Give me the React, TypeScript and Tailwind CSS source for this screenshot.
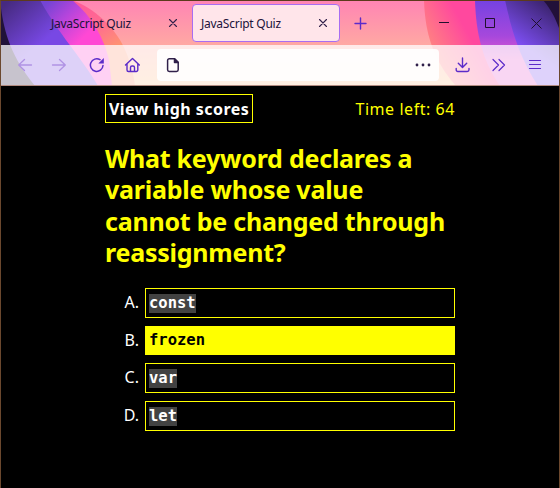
import React from "react";

const ui = "font-['Noto_Sans',sans-serif]";

function Backdrop() {
  return (
    <svg className="absolute inset-0" width="558" height="85" viewBox="1 1 558 85" aria-hidden="true">
      <defs>
        <linearGradient id="sky" x1="0" y1="0" x2="0" y2="1">
          <stop offset="0" stopColor="#ff84b4" />
          <stop offset="0.55" stopColor="#ffaaa2" />
          <stop offset="1" stopColor="#ffc48c" />
        </linearGradient>
        <linearGradient id="violet" gradientUnits="userSpaceOnUse" x1="10" y1="0" x2="45" y2="40">
          <stop offset="0" stopColor="#462a80" />
          <stop offset="1" stopColor="#7848e4" />
        </linearGradient>
        <linearGradient id="magenta" gradientUnits="userSpaceOnUse" x1="50" y1="0" x2="85" y2="36">
          <stop offset="0" stopColor="#7444d4" />
          <stop offset="0.45" stopColor="#b445dc" />
          <stop offset="1" stopColor="#ff48d4" />
        </linearGradient>
        <linearGradient id="coral" gradientUnits="userSpaceOnUse" x1="90" y1="0" x2="118" y2="45">
          <stop offset="0" stopColor="#ff5c98" />
          <stop offset="0.5" stopColor="#ff6c90" />
          <stop offset="1" stopColor="#ff9272" />
        </linearGradient>
        <linearGradient id="rcoral" gradientUnits="userSpaceOnUse" x1="422" y1="35" x2="458" y2="15">
          <stop offset="0" stopColor="#ff8480" />
          <stop offset="1" stopColor="#ff489e" />
        </linearGradient>
        <linearGradient id="rviolet" gradientUnits="userSpaceOnUse" x1="490" y1="0" x2="490" y2="60">
          <stop offset="0" stopColor="#7442e2" />
          <stop offset="0.6" stopColor="#a648dc" />
          <stop offset="1" stopColor="#e85cce" />
        </linearGradient>
        <linearGradient id="rindigo" gradientUnits="userSpaceOnUse" x1="548" y1="5" x2="520" y2="44">
          <stop offset="0" stopColor="#3c2470" />
          <stop offset="1" stopColor="#7c4ef0" />
        </linearGradient>
      </defs>
      <rect width="560" height="86" fill="url(#sky)" />
      <path d="M0 0H72C98 10 119 31 128 57C132 68 134 77 135 86H0Z" fill="url(#coral)" />
      <path d="M0 0H72C91 15 104 38 109 60L112 86H0Z" fill="url(#magenta)" />
      <path d="M0 0H40C51 20 63 36 75 52C86 67 93 77 98 86H0Z" fill="url(#violet)" />
      <path d="M0 0C3 28 9 54 35 86H0Z" fill="#211239" />
      <path d="M424 0C425 33 433 60 456 86H560V0Z" fill="url(#rcoral)" />
      <path d="M475 0C476 33 482 60 500 86H560V0Z" fill="url(#rviolet)" />
      <path d="M505 0C511 28 519 57 538 86H560V0Z" fill="url(#rindigo)" />
      <path d="M543 0C551 9 556 19 560 31V0Z" fill="#221039" />
    </svg>
  );
}

function Icon({ d, className = "text-[#5b2bc9]", width = 1.4 }: { d: string; className?: string; width?: number }) {
  return (
    <svg className={"block shrink-0 " + className} width="16" height="16" viewBox="0 0 16 16" fill="none" stroke="currentColor" strokeWidth={width} strokeLinecap="round" strokeLinejoin="round">
      <path d={d} />
    </svg>
  );
}

const cross = "M4.5 4.5l7 7M11.5 4.5l-7 7";

function TabBar() {
  return (
    <div className="relative flex h-[44px] items-center">
      <div className="flex w-[190px] items-center pl-[50px]">
        <span className="w-[90px] whitespace-nowrap pt-px text-[12px] tracking-[-0.250px] text-[#20123a]">JavaScript Quiz</span>
        <span className="ml-[24px]"><Icon d={cross} className="text-[#30204a]" width={1.1} /></span>
      </div>
      <div className="ml-px flex h-[38px] w-[148px] items-center rounded-[4px] border border-[#a76df2] bg-[#ffe5ea] pl-[8px]">
        <span className="w-[90px] whitespace-nowrap pt-px text-[12px] tracking-[-0.250px] text-[#20123a]">JavaScript Quiz</span>
        <span className="ml-[24px]"><Icon d={cross} className="text-[#30204a]" width={1.1} /></span>
      </div>
      <span className="ml-[13px]"><Icon d="M7.500 3v11M2 8.500h11" /></span>
      <svg className="ml-[66px]" width="112" height="16" viewBox="0 0 112 16" fill="none" stroke="#20102e" strokeWidth="1">
        <path d="M4 7.500h10M50.500 3.500h9v9h-9zM96.500 3.500l10 10M106.500 3.500l-10 10" />
      </svg>
    </div>
  );
}

function Toolbar() {
  return (
    <div className="relative flex h-[41px] items-center border-b border-[#b28b80] bg-white/75 pl-[16px]">
      <Icon d="M14.500 8H1.700M7.500 2.500L1.700 8l5.800 5.500" className="text-[#b092e4]" width={1.3} />
      <Icon d="M1.500 8h12.800M8.500 2.500L14.300 8l-5.800 5.500" className="ml-[18px] text-[#b092e4]" width={1.3} />
      <svg className="ml-[22px] shrink-0" width="16" height="16" viewBox="0 0 16 16" fill="none" stroke="#5b2bc9" strokeWidth="1.5">
        <path d="M11 2.700A6.300 6.300 0 1 0 14 8.500" strokeLinecap="round" />
        <path d="M14.800 1v5.500H9.300Z" fill="#5b2bc9" stroke="none" />
      </svg>
      <Icon className="ml-[19px] text-[#5b2bc9]" d="M1.500 8L8.500 1.400 15.300 8M3 7v6a1.500 1.500 0 0 0 1.500 1.500h7.800a1.500 1.500 0 0 0 1.500-1.500V7M6.500 14.300V10.500a1.500 1.500 0 0 1 1.500-1.500h1a1.500 1.500 0 0 1 1.500 1.500v3.800" />
      <div className="ml-[17px] flex h-[32px] w-[282px] items-center rounded-[4px] bg-white/90 pl-[8px] pr-[6px]">
        <svg width="16" height="16" viewBox="0 0 16 16" fill="none" stroke="#30204a" strokeWidth="1.500" strokeLinejoin="round">
          <path d="M4.300 1.800h5.400l3.500 3.500v7.400a1.700 1.700 0 0 1-1.700 1.700H4.300a1.700 1.700 0 0 1-1.700-1.700V3.500a1.700 1.700 0 0 1 1.700-1.700Z" />
          <path d="M9.500 2v3.600h3.700Z" fill="#30204a" />
        </svg>
        <svg className="ml-auto" width="18" height="16" viewBox="1 0 18 16" fill="#30204a">
          <circle cx="3" cy="8" r="1.400" /><circle cx="9" cy="8" r="1.400" /><circle cx="15" cy="8" r="1.400" />
        </svg>
      </div>
      <Icon className="ml-[16px] text-[#5b2bc9]" d="M7.500 1v9.200M3.300 6.200l4.200 4.200 4.200-4.200M1.200 11.500v1.300a1.700 1.700 0 0 0 1.700 1.700h9.400a1.700 1.700 0 0 0 1.700-1.700v-1.300" />
      <Icon className="ml-[20px] text-[#5b2bc9]" width={1.2} d="M2 2.500L7.500 8l-5.500 5.500M8 2.500L13.500 8l-5.500 5.500" />
      <Icon className="ml-[20px] text-[#5b2bc9]" width={1.2} d="M2.500 3.500h11M2.500 7.500h11M2.500 11.500h11" />
    </div>
  );
}

const answers = [
  { letter: "A.", code: "const", height: "h-[30px]" },
  { letter: "B.", code: "frozen", height: "h-[29px]", active: true },
  { letter: "C.", code: "var", height: "h-[30px]" },
  { letter: "D.", code: "let", height: "h-[30px]" },
];

export default function App() {
  return (
    <div className={"h-[488px] w-[560px] overflow-hidden border border-b-0 border-x-[#6b482e] border-t-[#5c3a1c] bg-black " + ui}>
      <header className="relative h-[85px]">
        <Backdrop />
        <TabBar />
        <Toolbar />
      </header>
      <main className="mx-auto w-[350px] pt-[8px]">
        <div className="flex items-center justify-between">
          <button className="h-[29px] w-[148px] whitespace-nowrap border border-[#ffff00] pl-[3px] text-left text-[16px] font-bold leading-[29px] tracking-[0.470px] text-white">View high scores</button>
          <span className="whitespace-nowrap pt-px text-[16px] tracking-[0.550px] text-[#ffff00]">Time left: 64</span>
        </div>
        <h1 className="mt-[20px] whitespace-nowrap text-[25px] font-bold leading-[31.300px] tracking-[-0.230px] text-[#ffff00]">
          What keyword declares a<br />variable whose value<br />cannot be changed through<br />reassignment?
        </h1>
        <ol className="mt-[20px] flex flex-col gap-[8px]">
          {answers.map((a) => (
            <li key={a.letter} className={"flex items-center " + a.height}>
              <span className="w-[34px] pb-px text-right text-[16px] leading-[27px] text-white">{a.letter}</span>
              <button className={"ml-[6px] flex h-full w-[310px] items-center border border-[#ffff00] pl-[3px] " + (a.active ? "bg-[#ffff00]" : "")}>
                <code className={"h-[19px] font-['DejaVu_Sans_Mono',monospace] text-[15.500px] font-bold leading-[19px] " + (a.active ? "text-black" : "bg-[#424242] text-white")}>{a.code}</code>
              </button>
            </li>
          ))}
        </ol>
      </main>
    </div>
  );
}
